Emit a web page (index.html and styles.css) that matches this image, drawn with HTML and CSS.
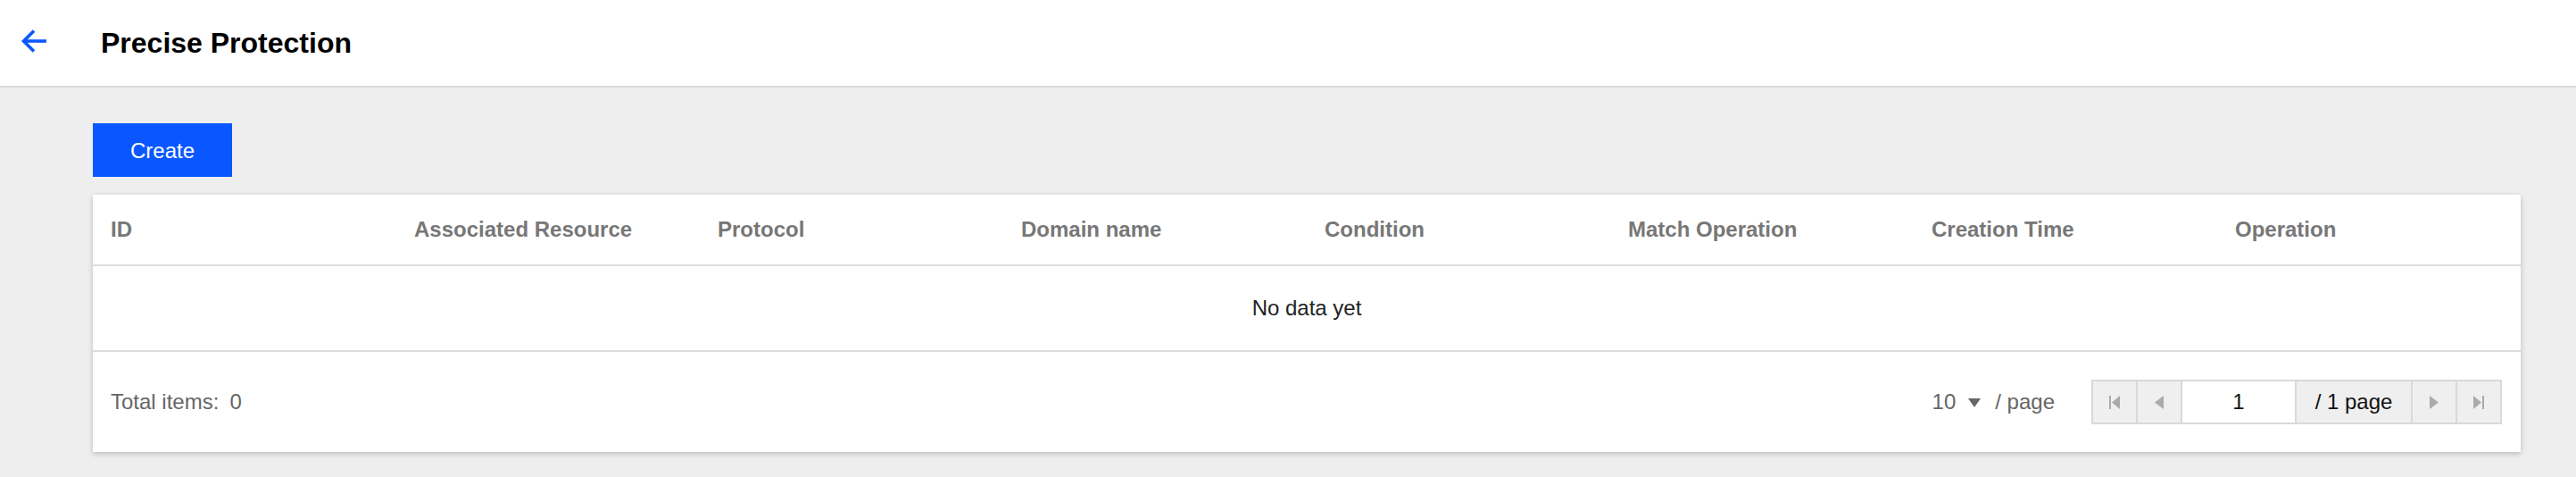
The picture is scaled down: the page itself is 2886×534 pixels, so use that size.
FILE: index.html
```html
<!DOCTYPE html>
<html lang="en">
<head>
    <meta charset="UTF-8">
    <meta name="viewport" content="width=device-width, initial-scale=1.0">
    <title>Precise Protection</title>
    <link rel="stylesheet" href="styles.css">
</head>
<body>
    <header class="topbar">
        <a class="back" href="#">
            <svg width="28" height="28" viewBox="0 0 28 28" fill="none" stroke="#0b57ff" stroke-width="3.6">
                <path d="M28 14H4"/>
                <path d="M14 2.5L2.5 14L14 25.5"/>
            </svg>
        </a>
        <h1>Precise Protection</h1>
    </header>

    <div class="main">
        <button class="btn-create">Create</button>

        <div class="card">
            <div class="table-head">
                <div class="cell">ID</div>
                <div class="cell">Associated Resource</div>
                <div class="cell">Protocol</div>
                <div class="cell">Domain name</div>
                <div class="cell">Condition</div>
                <div class="cell">Match Operation</div>
                <div class="cell">Creation Time</div>
                <div class="cell">Operation</div>
            </div>
            <div class="table-empty">No data yet</div>

            <div class="table-foot">
                <div class="total">Total items:<span class="total-num">0</span></div>
                <div class="pager-area">
                    <div class="page-size">
                        <span>10</span>
                        <span class="caret"></span>
                        <span>/ page</span>
                    </div>
                    <div class="pager">
                        <button class="pg-btn">
                            <svg width="12" height="15" viewBox="0 0 12 15"><rect x="0" y="0" width="2" height="15" fill="#aaa"/><polygon points="12,0 12,15 3,7.5" fill="#aaa"/></svg>
                        </button>
                        <button class="pg-btn">
                            <svg width="10" height="15" viewBox="0 0 10 15"><polygon points="10,0 10,15 0,7.5" fill="#aaa"/></svg>
                        </button>
                        <input class="pg-input" type="text" value="1">
                        <div class="pg-label">/ 1 page</div>
                        <button class="pg-btn">
                            <svg width="10" height="15" viewBox="0 0 10 15"><polygon points="0,0 0,15 10,7.5" fill="#aaa"/></svg>
                        </button>
                        <button class="pg-btn">
                            <svg width="12" height="15" viewBox="0 0 12 15"><polygon points="0,0 0,15 9,7.5" fill="#aaa"/><rect x="10" y="0" width="2" height="15" fill="#aaa"/></svg>
                        </button>
                    </div>
                </div>
            </div>
        </div>
    </div>
</body>
</html>
```

FILE: styles.css
```css
body {
    margin: 0;
    padding: 0;
    background-color: #eeeeee;
    font-family: "Liberation Sans", Arial, sans-serif;
    color: #333;
}
.topbar {
    height: 96px;
    background: white;
    border-bottom: 2px solid #d9d9d9;
    display: flex;
    align-items: center;
    padding-left: 24px;
}
.back {
    display: flex;
    width: 28px;
    height: 28px;
    margin-top: -4px;
}
.topbar h1 {
    margin: 0 0 0 61px;
    font-size: 32px;
    font-weight: bold;
    color: #000;
}
.main {
    padding: 40px 62px 28px 104px;
}
.btn-create {
    display: block;
    width: 156px;
    height: 60px;
    border: none;
    background: #0b57ff;
    color: white;
    font-family: inherit;
    font-size: 24px;
    cursor: pointer;
    padding: 2px 0 0;
}
.card {
    margin-top: 20px;
    background: white;
    box-shadow: 0 2px 6px rgba(0,0,0,0.22);
}
.table-head {
    display: grid;
    grid-template-columns: repeat(8, 1fr);
    height: 78px;
    align-items: center;
    border-bottom: 2px solid #dddddd;
}
.table-head .cell {
    padding: 0 20px;
    font-size: 24px;
    font-weight: bold;
    color: #777;
    white-space: nowrap;
}
.table-empty {
    height: 94px;
    display: flex;
    align-items: center;
    justify-content: center;
    font-size: 24px;
    color: #222;
    border-bottom: 2px solid #dddddd;
}
.table-foot {
    height: 112px;
    display: flex;
    align-items: center;
    justify-content: space-between;
    padding: 0 21px 0 20px;
}
.total {
    font-size: 24px;
    color: #666;
}
.total-num {
    margin-left: 12px;
}
.pager-area {
    display: flex;
    align-items: center;
}
.page-size {
    display: flex;
    align-items: center;
    font-size: 24px;
    color: #666;
    margin-right: 41px;
}
.caret {
    width: 0;
    height: 0;
    border-left: 7px solid transparent;
    border-right: 7px solid transparent;
    border-top: 10px solid #666;
    margin: 2px 16px 0 14px;
}
.pager {
    display: flex;
    height: 50px;
    box-sizing: border-box;
    border: 2px solid #d9d9d9;
    background: #efefef;
}
.pg-btn {
    width: 50px;
    height: 46px;
    padding: 0;
    border: none;
    border-right: 2px solid #d9d9d9;
    background: #efefef;
    display: flex;
    align-items: center;
    justify-content: center;
    cursor: pointer;
}
.pg-btn:last-child {
    width: 48px;
    border-right: none;
}
.pg-input {
    width: 128px;
    height: 46px;
    box-sizing: border-box;
    border: none;
    border-right: 2px solid #d9d9d9;
    background: white;
    text-align: center;
    font-family: inherit;
    font-size: 24px;
    color: #111;
    padding: 0;
    outline: none;
}
.pg-label {
    width: 130px;
    box-sizing: border-box;
    border-right: 2px solid #d9d9d9;
    display: flex;
    align-items: center;
    justify-content: center;
    font-size: 24px;
    color: #111;
}
```
